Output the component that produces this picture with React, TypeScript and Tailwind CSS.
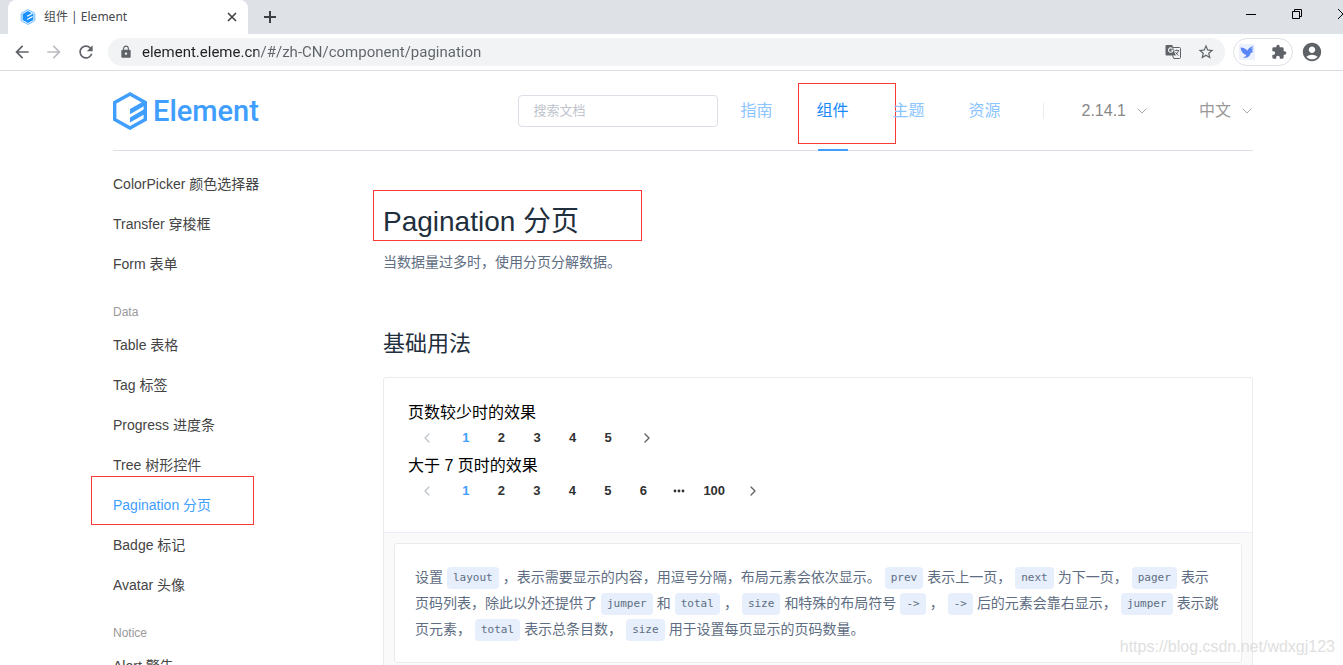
import type { ReactNode } from "react";
import { MdAccountCircle, MdArrowBack, MdArrowForward, MdExtension, MdLock, MdRefresh, MdStarBorder } from "react-icons/md";
import { ChevronDown, ChevronLeft, ChevronRight } from "lucide-react";

type MenuGroup = {
  title?: string;
  items: string[];
};

const menuGroups: MenuGroup[] = [
  { items: ["ColorPicker 颜色选择器", "Transfer 穿梭框", "Form 表单"] },
  {
    title: "Data",
    items: [
      "Table 表格",
      "Tag 标签",
      "Progress 进度条",
      "Tree 树形控件",
      "Pagination 分页",
      "Badge 标记",
      "Avatar 头像",
    ],
  },
  { title: "Notice", items: ["Alert 警告"] },
];

const navItems = ["指南", "组件", "主题", "资源"];

function ElementMark({ className }: { className?: string }) {
  return (
    <svg viewBox="0 0 34 38" className={className} aria-hidden="true">
      <path
        d="M17 1.9 1.7 10.6v16.8L17 36.1l15.3-8.7V10.6z"
        fill="none"
        stroke="currentColor"
        strokeWidth="3.4"
      />
      <path d="M17 17 32 8.4v5.2L17 22.2zM17 25.4l15-8.6V22l-15 8.6z" fill="currentColor" />
    </svg>
  );
}

function TranslateIcon({ className }: { className?: string }) {
  return (
    <svg viewBox="0 0 16 16" className={className} aria-hidden="true">
      <path d="M1.5 1h5.8l3.2 10.5H1.5a1 1 0 0 1-1-1V2a1 1 0 0 1 1-1z" fill="currentColor" />
      <path d="M7.4 4.7a2.2 2.2 0 1 0 .5 1.6H5.8" fill="none" stroke="#f1f3f4" strokeWidth="1.1" />
      <path d="M8 3.5h6.5a1 1 0 0 1 1 1v9a1 1 0 0 1-1 1H8.8l-1.3-3" fill="none" stroke="currentColor" />
      <path d="M9.6 6.5h4.6M11.8 5.5v1M13.4 6.5c-.3 2-1.5 3.3-3 4.3M10.6 8c.7 1.6 1.7 2.6 3 3.6" fill="none" stroke="currentColor" strokeWidth=".9" />
    </svg>
  );
}

function BrowserTabs() {
  return (
    <div className="flex h-[34px] shrink-0 items-stretch bg-[#dee1e6]">
      <div className="ml-2 flex w-60 items-center rounded-t-lg bg-white pl-3 pr-2">
        <svg viewBox="0 0 16 16" className="size-4" aria-hidden="true">
          <path d="M8 .6 14.8 4.3v7.4L8 15.4l-6.8-3.7V4.3z" fill="#fff" stroke="#6fbaff" />
          <path d="M8 2 13.4 5v6L8 14l-5.4-3V5z" fill="#1890ff" />
          <path d="m7.2 7.2 5-2.8M7.2 10.4l5.4-3" stroke="#fff" strokeWidth="1.1" />
        </svg>
        <span className="ml-2 flex-1 text-xs text-[#45494d]">组件 | Element</span>
        <button type="button" aria-label="关闭标签页" className="flex size-4 items-center justify-center text-[#3c4043]">
          <svg viewBox="0 0 10 10" className="size-[10px]" aria-hidden="true">
            <path d="m1 1 8 8M9 1 1 9" stroke="currentColor" strokeWidth="1.6" />
          </svg>
        </button>
      </div>
      <button type="button" aria-label="新标签页" className="ml-4 text-[#3c4043]">
        <svg viewBox="0 0 12 12" className="size-3" aria-hidden="true">
          <path d="M6 0v12M0 6h12" stroke="currentColor" strokeWidth="2" />
        </svg>
      </button>
      <div className="ml-auto flex items-start gap-9 overflow-hidden pt-[9px] text-black">
        <button type="button" aria-label="最小化">
          <svg viewBox="0 0 10 10" className="size-[10px]" aria-hidden="true">
            <path d="M0 5.5h10" stroke="currentColor" />
          </svg>
        </button>
        <button type="button" aria-label="还原">
          <svg viewBox="0 0 10 10" className="size-[10px]" fill="none" stroke="currentColor" aria-hidden="true">
            <path d="M.5 2.5h7v7h-7zM2.5 2.5v-2h7v7h-2" />
          </svg>
        </button>
        <button type="button" aria-label="关闭" className="-mr-[5px]">
          <svg viewBox="0 0 10 10" className="size-[10px]" aria-hidden="true">
            <path d="m0 0 10 10M10 0 0 10" stroke="currentColor" />
          </svg>
        </button>
      </div>
    </div>
  );
}

function BrowserToolbar() {
  return (
    <div className="flex h-[37px] shrink-0 items-center border-b border-[#dadce0] bg-white pl-3 pr-5 text-[#5f6368]">
      <div className="flex items-center gap-3">
        <button type="button" aria-label="后退">
          <MdArrowBack className="size-5" />
        </button>
        <button type="button" aria-label="前进" className="text-[#bbbdc0]">
          <MdArrowForward className="size-5" />
        </button>
        <button type="button" aria-label="重新加载">
          <MdRefresh className="size-5" />
        </button>
      </div>
      <div className="ml-3 flex h-7 flex-1 items-center rounded-full bg-[#f1f3f4] px-[10px]">
        <MdLock className="mx-px size-[14px]" />
        <label htmlFor="address" className="sr-only">
          地址
        </label>
        {/* host in dark, path in grey */}
        <input
          id="address"
          defaultValue="element.eleme.cn/#/zh-CN/component/pagination"
          className="ml-2 min-w-0 flex-1 bg-[linear-gradient(90deg,#202124_116px,#5f6368_116px)] bg-clip-text font-[Roboto,sans-serif] text-[15px] leading-6 text-transparent outline-none"
        />
        <button type="button" aria-label="翻译此页">
          <TranslateIcon className="size-4" />
        </button>
        <button type="button" aria-label="收藏" className="ml-4">
          <MdStarBorder className="size-[18px]" />
        </button>
      </div>
      <div className="ml-2 flex h-7 items-center gap-4 rounded-full border border-[#dfe1e5] px-[5px]">
        <svg viewBox="0 0 16 16" className="size-4" aria-hidden="true">
          <rect width="16" height="16" rx="1" fill="#edf0fd" />
          <path
            d="M1.5 3.5c3 .2 5 1 6.8 3C9.500 4.500 11.500 2.800 14.500 2l-2.200 3 2.400-.6-2 2.600 2 .8-3 1.200c-.6 3.400-3.400 5.400-7.700 4.600 2-.6 3-1.400 3.200-2.600C4 10 2 7.500 1.500 3.500z"
            fill="#5b86f7"
          />
        </svg>
        <MdExtension className="size-4" />
      </div>
      <MdAccountCircle className="ml-2 size-[22px]" />
    </div>
  );
}

function SiteHeader() {
  return (
    <header className="pl-[113px] pr-[90px]">
      <div className="flex h-20 items-center border-b border-[#dcdfe6]">
        <a href="#/zh-CN" className="flex items-center gap-[6px] text-[#409eff]">
          <ElementMark className="h-[38px] w-[34px]" />
          <span className="font-[Roboto,sans-serif] text-[29px] font-medium leading-8">Element</span>
        </a>
        <label htmlFor="search" className="sr-only">
          搜索文档
        </label>
        <input
          id="search"
          placeholder="搜索文档"
          className="ml-auto h-8 w-[200px] rounded border border-[#dcdfe6] px-[14px] text-[13px] outline-none placeholder:text-[#c0c4cc]"
        />
        <nav className="flex h-20 text-base leading-[80px]">
          {navItems.map((item) => (
            <a
              key={item}
              href="#/zh-CN/component"
              className={`relative px-[22px] ${item === "组件" ? "text-[#1989fa]" : "text-[#8cc5ff]"}`}
            >
              {item}
              {item === "组件" ? (
                <>
                  <span className="absolute bottom-0 left-6 h-[2px] w-[30px] bg-[#409eff]" />
                  <span className="absolute left-1 top-3 h-[61px] w-[98px] border border-[#f93a37]" />
                </>
              ) : null}
            </a>
          ))}
        </nav>
        <span className="ml-5 h-4 w-px bg-[#ebebeb]" />
        <button type="button" className="ml-[38px] flex items-center gap-2 text-base text-[#888]">
          2.14.1
          <ChevronDown className="size-4 text-[#aaa]" strokeWidth={1.5} />
        </button>
        <button type="button" className="-mr-[2px] ml-[49px] flex items-center gap-2 text-base text-[#999]">
          中文
          <ChevronDown className="size-4 text-[#aaa]" strokeWidth={1.5} />
        </button>
      </div>
    </header>
  );
}

function SideMenu() {
  return (
    <aside className="w-60 shrink-0 pt-[13px]">
      {menuGroups.map((group) => (
        <section key={group.items[0]}>
          {group.title ? (
            <h2 className="mt-[15px] text-xs leading-[26px] text-[#999]">{group.title}</h2>
          ) : null}
          <ul>
            {group.items.map((item) => {
              const active = item.startsWith("Pagination");
              return (
                <li key={item} className="relative h-10 text-sm leading-10">
                  <a href="#/zh-CN/component" className={active ? "text-[#409eff]" : "text-[#444]"}>
                    {item}
                  </a>
                  {active ? (
                    <span className="absolute -left-[22px] -top-[9px] h-[49px] w-[163px] border border-[#f93a37]" />
                  ) : null}
                </li>
              );
            })}
          </ul>
        </section>
      ))}
    </aside>
  );
}

function Pager({ pages, className }: { pages: string[]; className: string }) {
  return (
    <div className="mb-[3px] flex h-[30px] items-center px-[5px] text-[13px] font-bold text-[#303133]">
      <button type="button" aria-label="上一页" disabled className="flex w-[35px] justify-start pl-[6px] text-[#c0c4cc]">
        <ChevronLeft className="size-4" />
      </button>
      <div className={className}>
        {pages.map((page) => (
          <button key={page} type="button" className={page === "1" ? "text-[#409eff]" : ""}>
            {page === "more" ? (
              <svg viewBox="0 0 12 4" className="mx-auto h-1 w-3" fill="currentColor" aria-label="更多">
                <circle cx="2" cy="2" r="1.4" />
                <circle cx="6" cy="2" r="1.4" />
                <circle cx="10" cy="2" r="1.4" />
              </svg>
            ) : (
              page
            )}
          </button>
        ))}
      </div>
      <button type="button" aria-label="下一页" className="flex w-9 justify-end pr-[7px] text-[#606266]">
        <ChevronRight className="size-4" />
      </button>
    </div>
  );
}

function Code({ children }: { children: ReactNode }) {
  return (
    <code className="mx-1 inline-block h-[22px] whitespace-nowrap rounded bg-[#e6effb] px-[6px] align-middle font-['DejaVu_Sans_Mono',monospace] text-[11px] leading-[22px]">
      {children}
    </code>
  );
}

function DemoBlock() {
  return (
    <div className="rounded-[3px] border border-[#ebebeb]">
      <div className="px-6 pb-[23px] pt-[25px] text-base leading-5 text-black">
        <p>页数较少时的效果</p>
        <Pager pages={["1", "2", "3", "4", "5"]} className="grid w-[178px] grid-cols-5" />
        <p>大于 7 页时的效果</p>
        <Pager pages={["1", "2", "3", "4", "5", "6", "more", "100"]} className="grid w-[284px] grid-cols-8" />
      </div>
      <div className="border-t border-[#eaeefb] bg-[#fafafa] p-[10px]">
        <p className="rounded-[3px] border border-[#ebebeb] bg-white p-5 text-sm leading-[26px] text-[#5e6d82]">
          设置<Code>layout</Code>，表示需要显示的内容，用逗号分隔，布局元素会依次显示。<Code>prev</Code>
          表示上一页，<Code>next</Code>为下一页，<Code>pager</Code>表示页码列表，除此以外还提供了
          <Code>jumper</Code>和<Code>total</Code>，<Code>size</Code>和特殊的布局符号<Code>-&gt;</Code>，
          <Code>-&gt;</Code>后的元素会靠右显示，<Code>jumper</Code>表示跳页元素，<Code>total</Code>
          表示总条目数，<Code>size</Code>用于设置每页显示的页码数量。
        </p>
      </div>
    </div>
  );
}

export default function App() {
  return (
    <div className="relative flex h-screen flex-col overflow-hidden bg-white font-['Noto_Sans','Noto_Sans_CJK_SC',sans-serif]">
      <BrowserTabs />
      <BrowserToolbar />
      <div className="min-h-0 flex-1 overflow-hidden font-['Liberation_Sans','Noto_Sans_CJK_SC',sans-serif]">
        <SiteHeader />
        <div className="flex pl-[113px] pr-[90px]">
          <SideMenu />
          <main className="min-w-0 flex-1 pl-[30px] pt-[51px] text-[#1f2f3d]">
            <div className="relative">
              <h1 className="text-[28px] leading-10">Pagination 分页</h1>
              <span className="absolute -left-[10px] -top-3 h-[51px] w-[269px] border border-[#f93a37]" />
            </div>
            <p className="mt-2 text-sm leading-6 text-[#5e6d82]">当数据量过多时，使用分页分解数据。</p>
            <h2 className="mb-[18px] mt-[55px] text-[22px] leading-[30px]">基础用法</h2>
            <DemoBlock />
          </main>
        </div>
        <span className="absolute bottom-2 right-2 text-base leading-5 text-[#e0e0e0]">
          https://blog.csdn.net/wdxgj123
        </span>
      </div>
    </div>
  );
}
